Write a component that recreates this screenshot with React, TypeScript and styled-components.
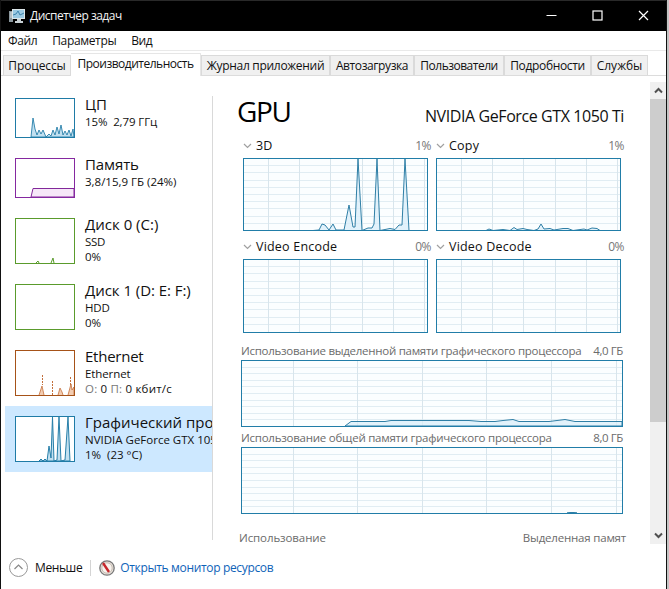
import React from "react";
import styled, { createGlobalStyle } from "styled-components";

const Global = createGlobalStyle`
  * { box-sizing: border-box; }
  body { margin: 0; background: #c4c4c4; overflow: hidden; }
`;

const Window = styled.div`
  width: 667px; height: 589px;
  display: flex; flex-direction: column;
  background: #fff;
  border-left: 1px solid #111; border-right: 1px solid #111;
  font: 12px/16px "Open Sans", "Noto Sans", sans-serif;
  color: #111;
  white-space: nowrap;
`;

const TitleBar = styled.header`
  height: 31px; flex: none;
  display: flex; align-items: center;
  background: #000; color: #f2f2f2;
  border-top: 1px solid #292929;
  padding-left: 7px;
`;
const TitleText = styled.span<{ $ls?: number }>`
  flex: 1; margin-left: 4px;
  letter-spacing: ${p => p.$ls ?? 0}px;
`;
const WindowButton = styled.button`
  width: 46px; height: 30px; padding: 0 0 2px;
  display: flex; align-items: center; justify-content: center;
  border: 0; background: none; color: #fff;
`;

const Text = styled.span<{ $ls?: number }>`
  letter-spacing: ${p => p.$ls ?? 0}px;
`;

const MenuBar = styled.nav`
  height: 20px; flex: none;
  display: flex; align-items: center; gap: 15px;
  padding: 0 0 0 7px;
  border-bottom: 1px solid #e9e9e9;
`;

const TabStrip = styled.div`
  height: 25px; flex: none;
  display: flex; align-items: flex-end;
  padding-left: 2px;
  border-bottom: 1px solid #dcdcdc;
`;
const Tab = styled.div<{ $w: number; $active?: boolean; $ls: number }>`
  width: ${p => p.$w}px; height: ${p => (p.$active ? 23 : 20)}px;
  display: flex; align-items: center; justify-content: center;
  padding-bottom: ${p => (p.$active ? 2 : 0)}px;
  margin-bottom: ${p => (p.$active ? -1 : 0)}px;
  background: ${p => (p.$active ? "#fff" : "#f0f0f0")};
  border: 1px solid ${p => (p.$active ? "#e6e6e6" : "#dadada")};
  border-bottom: 0;
  border-left-width: ${p => (p.$active ? 0 : 1)}px;
  letter-spacing: ${p => p.$ls}px;
`;

const Body = styled.main`
  height: 468px; flex: none;
  display: flex;
`;
const Sidebar = styled.aside`
  width: 208px; height: 444px;
  margin: 20px 0 0 4px;
  overflow: hidden;
  border-right: 1px solid #d9d9d9;
`;
const DeviceList = styled.div`
  margin-top: -8px;
`;
const Item = styled.div<{ $h: number; $selected?: boolean }>`
  height: ${p => p.$h}px;
  display: flex; gap: 10px;
  padding: 10px 0 0 10px;
  background: ${p => (p.$selected ? "#cde8ff" : "#fff")};
`;
const Thumb = styled.svg`
  display: block; flex: none; background: #fff;
`;
const ItemText = styled.div`
  display: flex; flex-direction: column;
  margin-top: -3px;
`;
const ItemName = styled.span<{ $ls: number }>`
  font-size: 15px; line-height: 19px; height: 19px;
  letter-spacing: ${p => p.$ls}px;
`;
const ItemDetail = styled.span<{ $ls: number }>`
  font-size: 11.5px; line-height: 15px;
  letter-spacing: ${p => p.$ls}px;
  white-space: pre;
`;
const Muted = styled.span`
  color: #777;
`;

const Detail = styled.section`
  width: 413px; height: 468px;
  margin-left: 24px; padding-top: 13px;
  overflow: hidden;
  display: flex; flex-direction: column;
`;
const Heading = styled.div`
  width: 387px; height: 45px; flex: none;
  display: flex; justify-content: space-between; align-items: baseline;
`;
const Title = styled.h1<{ $ls: number }>`
  margin: 0; font-size: 28px; line-height: 45px; font-weight: 400; color: #000;
  letter-spacing: ${p => p.$ls}px;
`;
const Model = styled.span<{ $ls: number }>`
  font-size: 16px;
  letter-spacing: ${p => p.$ls}px;
`;
const Engines = styled.div`
  display: grid; grid-template-columns: 185px 185px; column-gap: 8px;
  padding-left: 6px; flex: none;
`;
const EngineHead = styled.div<{ $h: number; $top: number }>`
  height: ${p => p.$h}px; padding-top: ${p => p.$top}px;
  display: flex; align-items: center;
  font-size: 12.5px;
`;
const Chevron = styled.svg`
  margin-right: 4px; display: block;
`;
const Percent = styled.span`
  margin-left: auto; margin-right: -3px;
  color: #777; font-size: 12px; letter-spacing: -0.5px;
`;
const MemoryHead = styled.div<{ $h: number; $top: number }>`
  width: 382px; height: ${p => p.$h}px; flex: none;
  margin-left: 4px; padding-top: ${p => p.$top}px;
  display: flex; align-items: center; justify-content: space-between;
  color: #6b6b6b; font-size: 11.5px;
`;
const MemoryChart = styled.div`
  padding-left: 4px; flex: none;
`;
const StatRow = styled.div`
  display: flex; justify-content: space-between; flex: none;
  width: 389px; margin-top: 16px; padding-left: 2px;
  color: #6b6b6b; font-size: 11.5px; line-height: 16px;
`;

const ScrollBar = styled.div`
  width: 16px; height: 462px; margin-top: 6px;
  display: flex; flex-direction: column;
  background: #f0f0f0;
`;
const ScrollArrow = styled.div`
  height: 17px; flex: none;
  display: flex; align-items: center; justify-content: center;
`;
const ScrollThumb = styled.div`
  height: 323px; background: #cdcdcd;
`;
const Spacer = styled.div`
  flex: 1;
`;

const Footer = styled.footer`
  flex: 1;
  display: flex; align-items: center;
  padding: 5px 0 3px 8px;
`;
const Divider = styled.i`
  width: 1px; height: 16px; margin: 0 8px; background: #d4d4d4;
`;
const Link = styled.a<{ $ls: number }>`
  margin-left: 5px; color: #0e63b8;
  letter-spacing: ${p => p.$ls}px;
`;
const Less = styled.span<{ $ls: number }>`
  margin-left: 7px; letter-spacing: ${p => p.$ls}px;
`;

type ChartProps = { w: number; h: number; cols: number[]; rowStep: number; line?: string };

function Chart({ w, h, cols, rowStep, line }: ChartProps) {
  const rows: number[] = [];
  for (let y = rowStep; y < h - 3; y += rowStep) rows.push(Math.round(y) + 0.5);
  return (
    <svg width={w} height={h} display="block">
      <rect width={w} height={h} fill="#fbfeff" />
      {rows.map(y => <path key={y} d={`M1 ${y}H${w - 1}`} stroke="#e1edf3" />)}
      {cols.map(x => <path key={x} d={`M${x + 0.5} 1V${h - 1}`} stroke="#d8e5ec" />)}
      {line && <path d={line} fill="#d9eefa" fillOpacity=".75" stroke="#2f7fa6" strokeWidth="1" />}
      <rect x=".5" y=".5" width={w - 1} height={h - 1} fill="none" stroke="#217da8" />
    </svg>
  );
}

const engineCols = [25, 56, 87, 119, 150, 181];
const memoryCols = [52, 116, 181, 245, 310, 375];

const engines = [
  { name: "3D", pct: "1%", ls: 0,
    line: "M70 72.500L76 72L79 66L82 67L86 72L90 66L93 72L101 72L106 47L110 69L112 69L115 1L119 72.500L125 70L129 70L131 66L134 1L137 72.500L147 70.500L152 71.500L156 67L159 67L162 1L166 72.500Z" },
  { name: "Copy", pct: "1%", ls: 0.2,
    line: "M50 72.500L53 71L57 72.500L67 71.500L74 72.500L78 69.500L81 71.500L87 70.500L91 71.500L98 72.500L102 71L105 66L108 71L114 70.500L118 72L127 70.500L132 70.500L137 72.500L148 71L151 72L156 70L161 70.500L164 72.500Z" },
  { name: "Video Encode", pct: "0%", ls: 0.2 },
  { name: "Video Decode", pct: "0%", ls: 0.2 },
];

function ChevronDown() {
  return (
    <Chevron width="9" height="6" viewBox="0 0 9 6">
      <path d="M1 1L4.500 4.500L8 1" fill="none" stroke="#a0a0a0" strokeWidth="1.200" />
    </Chevron>
  );
}

type DeviceProps = {
  name: string; nameLs: number; color: string; h: number;
  details: [React.ReactNode, number][];
  selected?: boolean; children?: React.ReactNode;
};

function Device({ name, nameLs, color, h, details, selected, children }: DeviceProps) {
  return (
    <Item $h={h + 20} $selected={selected}>
      <Thumb width="60" height={h}>
        {children}
        <rect x=".5" y=".5" width="59" height={h - 1} fill="none" stroke={color} />
      </Thumb>
      <ItemText>
        <ItemName $ls={nameLs}>{name}</ItemName>
        {details.map(([text, ls], i) => <ItemDetail key={i} $ls={ls}>{text}</ItemDetail>)}
      </ItemText>
    </Item>
  );
}

export default function App() {
  return (
    <>
      <Global />
      <Window>
        <TitleBar>
          <svg width="18" height="16" viewBox="0 0 18 16">
            <path d="M1 3H5V14H1Z" fill="#8c989e" />
            <path d="M2 5H4M2 7H4M2 9H4" stroke="#dce5e8" />
            <rect x="4.500" y="1.500" width="12" height="9" fill="#9ac9e2" stroke="#dce6e9" />
            <path d="M5 7L8 6L10 3L12 7L16 5" fill="none" stroke="#3f83ac" />
            <path d="M9 11H13V13H15V15H7V13H9Z" fill="#c8d1d5" />
          </svg>
          <TitleText $ls={-0.5}>Диспетчер задач</TitleText>
          <WindowButton><svg width="11" height="11"><path d="M.5 5.500H10.500" stroke="currentColor" /></svg></WindowButton>
          <WindowButton><svg width="11" height="11"><rect x="1" y="1" width="9" height="9" fill="none" stroke="currentColor" strokeWidth="1.200" /></svg></WindowButton>
          <WindowButton><svg width="11" height="11"><path d="M1 1L10 10M10 1L1 10" stroke="currentColor" strokeWidth="1.200" /></svg></WindowButton>
        </TitleBar>
        <MenuBar>
          <Text $ls={-0.4}>Файл</Text><Text $ls={-0.33}>Параметры</Text><Text $ls={-0.5}>Вид</Text>
        </MenuBar>
        <TabStrip>
          <Tab $w={68} $ls={-0.1}>Процессы</Tab>
          <Tab $w={130} $ls={-0.5} $active>Производительность</Tab>
          <Tab $w={129} $ls={-0.3}>Журнал приложений</Tab>
          <Tab $w={84} $ls={-0.4}>Автозагрузка</Tab>
          <Tab $w={90} $ls={-0.5}>Пользователи</Tab>
          <Tab $w={87} $ls={-0.35}>Подробности</Tab>
          <Tab $w={57} $ls={0}>Службы</Tab>
        </TabStrip>
        <Body>
          <Sidebar>
            <DeviceList>
              <Device name="ЦП" nameLs={0} color="#1f7ba6" h={40} details={[["15%  2,79 ГГц", -0.1]]}>
                <path d="M16 39L18 20L20 31L22 37L24 32L26 36L28 32L31 39L34 36L36 38L38 32L40 37L42 29L44 36L46 27L48 37L50 33L52 37L54 32L56 38L58 31L59 39Z" fill="#c2e0f0" stroke="#277fa9" strokeWidth=".9" />
              </Device>
              <Device name="Память" nameLs={-0.1} color="#8528a0" h={40} details={[["3,8/15,9 ГБ (24%)", 0]]}>
                <path d="M16 39L18 30.500H59V39Z" fill="#f6e7f8" stroke="#82289a" />
              </Device>
              <Device name="Диск 0 (C:)" nameLs={0} color="#5a9b2c" h={46} details={[["SSD", -0.3], ["0%", -0.2]]}>
                <path d="M21 45L23 43L24 45M36 45L38 40L39 45" fill="none" stroke="#5a9b2c" />
              </Device>
              <Device name="Диск 1 (D: E: F:)" nameLs={-0.05} color="#5a9b2c" h={46} details={[["HDD", -0.2], ["0%", -0.2]]} />
              <Device name="Ethernet" nameLs={-0.25} color="#a65218" h={46}
                details={[["Ethernet", -0.1], [<><Muted>О:</Muted> 0 <Muted>П:</Muted> 0 кбит/с</>, 0.2]]}>
                <path d="M24 45L27 36L29 45M43 45L45 38L47 42L48 45M53 45L56 34L57 40L59 37V45" fill="#f3cdb2" stroke="#c4703c" strokeWidth=".8" />
                <path d="M27.500 25V35M37.500 31V45M55.500 27V35" stroke="#c4703c" strokeDasharray="2 1" />
              </Device>
              <Device name="Графический процессор" nameLs={0} color="#1f7ba6" h={46} selected
                details={[["NVIDIA GeForce GTX 1050 Ti", 0], ["1%  (23 °C)", 0]]}>
                <path d="M24 45L26 43L28 45L30 43L32 45L34 30L36 42L37.500 1L39 45L42 44L44 1L46 45L50 44L53 1L55 45Z" fill="#c2e0f0" stroke="#277fa9" />
              </Device>
            </DeviceList>
          </Sidebar>
          <Detail>
            <Heading>
              <Title $ls={-1.3}>GPU</Title>
              <Model $ls={-0.41}>NVIDIA GeForce GTX 1050 Ti</Model>
            </Heading>
            <Engines>
              {engines.map((e, i) => (
                <div key={e.name}>
                  <EngineHead $h={i < 2 ? 24 : 28} $top={i < 2 ? 0 : 3}>
                    <ChevronDown />
                    <Text $ls={e.ls}>{e.name}</Text>
                    <Percent>{e.pct}</Percent>
                  </EngineHead>
                  <Chart w={185} h={i < 2 ? 73 : 74} cols={engineCols} rowStep={7.200} line={e.line} />
                </div>
              ))}
            </Engines>
            <MemoryHead $h={27} $top={8}>
              <Text $ls={-0.27}>Использование выделенной памяти графического процессора</Text>
              <Text $ls={-0.4}>4,0 ГБ</Text>
            </MemoryHead>
            <MemoryChart>
              <Chart w={382} h={67} cols={memoryCols} rowStep={6.600}
                line="M104 66L110 61.500H144L150 60.500H228L240 61.500H254L262 60.500L272 59.500L278 61.500H308L324 59.500L334 61.500H381V66Z" />
            </MemoryChart>
            <MemoryHead $h={20} $top={2}>
              <Text $ls={-0.24}>Использование общей памяти графического процессора</Text>
              <Text $ls={-0.4}>8,0 ГБ</Text>
            </MemoryHead>
            <MemoryChart>
              <Chart w={382} h={67} cols={memoryCols} rowStep={6.600} line="M326 66L329 65.500H333L336 66Z" />
            </MemoryChart>
            <StatRow>
              <Text $ls={-0.1}>Использование</Text>
              <Text $ls={-0.2}>Выделенная памят</Text>
            </StatRow>
          </Detail>
          <ScrollBar>
            <ScrollArrow><svg width="9" height="7"><path d="M1 5.500L4.500 2L8 5.500" fill="none" stroke="#505050" strokeWidth="2" /></svg></ScrollArrow>
            <ScrollThumb />
            <Spacer />
            <ScrollArrow><svg width="9" height="7"><path d="M1 1.500L4.500 5L8 1.500" fill="none" stroke="#505050" strokeWidth="2" /></svg></ScrollArrow>
          </ScrollBar>
        </Body>
        <Footer>
          <svg width="19" height="19"><circle cx="9.500" cy="9.500" r="9" fill="#fff" stroke="#999" /><path d="M5.500 11L9.500 7L13.500 11" fill="none" stroke="#888" strokeWidth="1.200" /></svg>
          <Less $ls={-0.4}>Меньше</Less>
          <Divider />
          <svg width="16" height="16"><circle cx="8" cy="8" r="7.200" fill="#e6e0da" stroke="#777" strokeWidth="1.300" /><circle cx="8" cy="8" r="5.200" fill="#f8f3ee" stroke="#c9beb4" /><path d="M4 3L10 12" stroke="#c6262b" strokeWidth="2.400" /></svg>
          <Link $ls={-0.34}>Открыть монитор ресурсов</Link>
        </Footer>
      </Window>
    </>
  );
}
